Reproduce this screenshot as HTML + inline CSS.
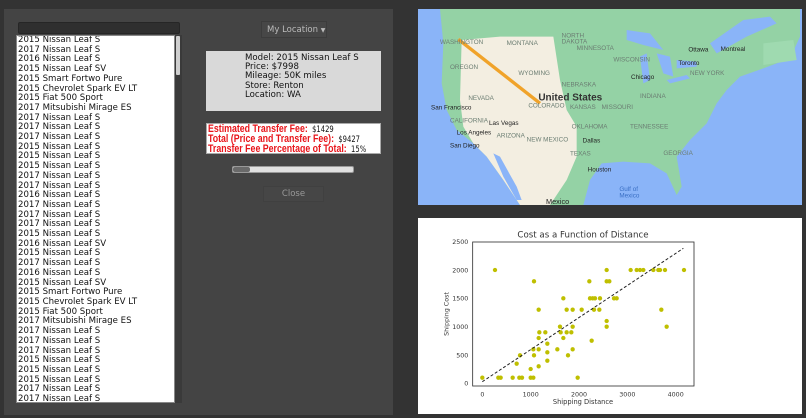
<!DOCTYPE html>
<html><head><meta charset="utf-8"><style>
*{margin:0;padding:0;box-sizing:border-box}
body{width:806px;height:418px;background:#333;position:relative;overflow:hidden;font-family:"DejaVu Sans","Liberation Sans",sans-serif}
.abs{position:absolute}
#panel{left:4px;top:9px;width:389px;height:406px;background:#444}
#search{left:18px;top:22px;width:162px;height:12px;background:#2f2f2f;border:1px solid #262626;border-radius:2px}
#list{left:16px;top:35px;width:159px;height:368px;background:#fff;border:1px solid #888;overflow:hidden;font-size:8.6px;line-height:9.7px;color:#111;padding-left:1px;padding-top:0px;white-space:nowrap}
#sb{left:175px;top:35px;width:7px;height:368px;background:#3a3a3a}
#thumb{left:176px;top:36px;width:4px;height:39px;background:#cfcfcf;border-radius:1px}
#dd{left:261px;top:21px;width:66px;height:17px;background:#474747;border:1px solid #3c3c3c;color:#bbb;font-size:8.5px;line-height:16px;padding-left:5px;white-space:nowrap}
#info{left:206px;top:51px;width:175px;height:60px;background:#d9d9d9;font-size:8.6px;line-height:9.2px;color:#111;padding-left:39px;padding-top:3px;white-space:nowrap}
#fee{left:206px;top:123px;width:175px;height:31px;background:#fff;border:1px solid #aaa;padding-left:1px;padding-top:0px;overflow:hidden}
#fee div{white-space:nowrap;transform:scaleX(0.8);transform-origin:left;height:9.9px;line-height:10px;font-size:8.5px;color:#111}
#fee b{color:#e8151b;font-family:"Liberation Sans",sans-serif;font-size:11px;font-weight:bold}
#pb{left:232px;top:166px;width:122px;height:7px;background:#e0e0e0;border:1px solid #999;border-radius:2px}
#pbc{left:233px;top:167px;width:17px;height:5px;background:#6a6a6a;border-radius:2px}
#close{left:263px;top:186px;width:61px;height:16px;background:#464646;border:1px solid #404040;color:#999;font-size:8.5px;line-height:15px;text-align:center}
</style></head><body>
<div id="panel" class="abs"></div>
<div id="search" class="abs"></div>
<div id="list" class="abs">2015 Nissan Leaf S<br>2017 Nissan Leaf S<br>2016 Nissan Leaf S<br>2015 Nissan Leaf SV<br>2015 Smart Fortwo Pure<br>2015 Chevrolet Spark EV LT<br>2015 Fiat 500 Sport<br>2017 Mitsubishi Mirage ES<br>2017 Nissan Leaf S<br>2017 Nissan Leaf S<br>2017 Nissan Leaf S<br>2015 Nissan Leaf S<br>2015 Nissan Leaf S<br>2015 Nissan Leaf S<br>2017 Nissan Leaf S<br>2017 Nissan Leaf S<br>2016 Nissan Leaf S<br>2017 Nissan Leaf S<br>2017 Nissan Leaf S<br>2017 Nissan Leaf S<br>2015 Nissan Leaf S<br>2016 Nissan Leaf SV<br>2015 Nissan Leaf S<br>2017 Nissan Leaf S<br>2016 Nissan Leaf S<br>2015 Nissan Leaf SV<br>2015 Smart Fortwo Pure<br>2015 Chevrolet Spark EV LT<br>2015 Fiat 500 Sport<br>2017 Mitsubishi Mirage ES<br>2017 Nissan Leaf S<br>2017 Nissan Leaf S<br>2017 Nissan Leaf S<br>2015 Nissan Leaf S<br>2015 Nissan Leaf S<br>2015 Nissan Leaf S<br>2017 Nissan Leaf S<br>2017 Nissan Leaf S</div>
<div id="sb" class="abs"></div><div id="thumb" class="abs"></div>
<div id="dd" class="abs">My Location <span style="font-size:6px">&#9660;</span></div>
<div id="info" class="abs">Model: 2015 Nissan Leaf S<br>Price: $7998<br>Mileage: 50K miles<br>Store: Renton<br>Location: WA</div>
<div id="fee" class="abs"><div><b>Estimated Transfer Fee:</b>&nbsp; $1429</div><div><b>Total (Price and Transfer Fee):</b>&nbsp; $9427</div><div><b>Transfer Fee Percentage of Total:</b>&nbsp; 15%</div></div>
<div id="pb" class="abs"></div><div id="pbc" class="abs"></div>
<div id="close" class="abs">Close</div>

<svg class="abs" style="left:418px;top:9px" width="384" height="196" viewBox="24 27 1152 588" preserveAspectRatio="none">
<rect x="24" y="27" width="1152" height="588" fill="#8ab4f8"/>
<path d="M90 27 L1170 27 L1170 110 L1140 175 L1060 205 L990 230 L950 270 L920 310 L890 370 L840 420 L800 470 L815 560 L800 585 L770 520 L720 490 L640 485 L575 490 L540 540 L520 615 L330 615 L280 540 L230 470 L190 430 L140 390 L110 330 L95 250 L100 130 Z" fill="#94d2a5"/>
<path d="M155 120 L270 110 L430 110 L450 240 L470 330 L500 380 L500 470 L470 540 L420 615 L330 615 L280 540 L230 470 L190 430 L160 380 L150 300 Z" fill="#f3eee1"/>
<path d="M250 460 L270 470 L320 560 L335 600 L320 600 L280 530 Z" fill="#8ab4f8"/>
<path d="M650 90 L720 100 L760 150 L700 135 L650 120 Z M690 170 L710 160 L720 240 L700 250 Z M740 160 L780 170 L790 230 L760 220 Z M800 180 L860 185 L860 200 L800 205 Z M770 240 L830 225 L840 235 L780 250 Z M900 130 L1000 60 L1080 50 L1100 70 L1010 110 L920 160 Z" fill="#8ab4f8"/>
<path d="M1060 130 L1150 120 L1160 180 L1060 195 Z" fill="#9fdab0"/>
<line x1="145" y1="118" x2="390" y2="310" stroke="#f0a32a" stroke-width="10"/>
<g font-family="Liberation Sans,sans-serif" fill="#6b7d72" font-size="19">
<text x="385" y="302" font-size="30" font-weight="bold" fill="#333">United States</text>
<text x="63" y="328" fill="#222">San Francisco</text>
<text x="237" y="375" fill="#222">Las Vegas</text>
<text x="140" y="403" fill="#222">Los Angeles</text>
<text x="120" y="442" fill="#222">San Diego</text>
<text x="518" y="428" fill="#222">Dallas</text>
<text x="533" y="515" fill="#222">Houston</text>
<text x="663" y="237" fill="#222">Chicago</text>
<text x="805" y="195" fill="#222">Toronto</text>
<text x="835" y="155" fill="#222">Ottawa</text>
<text x="932" y="153" fill="#222">Montreal</text>
<text x="408" y="612" fill="#222" font-size="22">Mexico</text>
<text x="90" y="132">WASHINGTON</text><text x="290" y="135">MONTANA</text><text x="120" y="207">OREGON</text>
<text x="325" y="225">WYOMING</text><text x="175" y="300">NEVADA</text><text x="355" y="322">COLORADO</text>
<text x="455" y="260">NEBRASKA</text><text x="480" y="327">KANSAS</text><text x="485" y="385">OKLAHOMA</text>
<text x="350" y="424">NEW MEXICO</text><text x="120" y="367">CALIFORNIA</text><text x="260" y="412">ARIZONA</text>
<text x="480" y="466">TEXAS</text><text x="455" y="112">NORTH</text><text x="455" y="130">DAKOTA</text>
<text x="500" y="150">MINNESOTA</text><text x="610" y="185">WISCONSIN</text><text x="575" y="327">MISSOURI</text>
<text x="690" y="294">INDIANA</text><text x="660" y="385">TENNESSEE</text><text x="840" y="225">NEW YORK</text>
<text x="760" y="465">GEORGIA</text><text x="628" y="573" fill="#3a6fc4">Gulf of</text><text x="628" y="592" fill="#3a6fc4">Mexico</text>
</g>
</svg>

<svg class="abs" style="left:418px;top:218px" width="384" height="196" viewBox="24 24 1152 588" preserveAspectRatio="none">
<rect x="24" y="24" width="1152" height="588" fill="#fff"/>
<rect x="188" y="96" width="664" height="432" fill="none" stroke="#333" stroke-width="2.5"/>
<g fill="#bfbf00">
<circle cx="217" cy="503" r="6.5"/><circle cx="255" cy="180" r="6.5"/><circle cx="265" cy="503" r="6.5"/><circle cx="272" cy="503" r="6.5"/><circle cx="308" cy="503" r="6.5"/><circle cx="320" cy="461" r="6.5"/><circle cx="328" cy="503" r="6.5"/><circle cx="336" cy="503" r="6.5"/><circle cx="330" cy="436" r="6.5"/><circle cx="362" cy="477" r="6.5"/><circle cx="362" cy="503" r="6.5"/><circle cx="370" cy="503" r="6.5"/><circle cx="372" cy="214" r="6.5"/><circle cx="370" cy="418" r="6.5"/><circle cx="372" cy="436" r="6.5"/><circle cx="386" cy="299" r="6.5"/><circle cx="386" cy="384" r="6.5"/><circle cx="386" cy="418" r="6.5"/><circle cx="386" cy="469" r="6.5"/><circle cx="388" cy="367" r="6.5"/><circle cx="406" cy="367" r="6.5"/><circle cx="412" cy="401" r="6.5"/><circle cx="412" cy="427" r="6.5"/><circle cx="412" cy="452" r="6.5"/><circle cx="442" cy="418" r="6.5"/><circle cx="450" cy="350" r="6.5"/><circle cx="452" cy="367" r="6.5"/><circle cx="460" cy="265" r="6.5"/><circle cx="460" cy="384" r="6.5"/><circle cx="470" cy="299" r="6.5"/><circle cx="470" cy="367" r="6.5"/><circle cx="474" cy="436" r="6.5"/><circle cx="484" cy="367" r="6.5"/><circle cx="488" cy="299" r="6.5"/><circle cx="488" cy="350" r="6.5"/><circle cx="488" cy="418" r="6.5"/><circle cx="503" cy="503" r="6.5"/><circle cx="515" cy="299" r="6.5"/><circle cx="538" cy="214" r="6.5"/><circle cx="540" cy="265" r="6.5"/><circle cx="545" cy="392" r="6.5"/><circle cx="548" cy="265" r="6.5"/><circle cx="552" cy="299" r="6.5"/><circle cx="555" cy="265" r="6.5"/><circle cx="568" cy="299" r="6.5"/><circle cx="570" cy="265" r="6.5"/><circle cx="590" cy="180" r="6.5"/><circle cx="590" cy="214" r="6.5"/><circle cx="590" cy="333" r="6.5"/><circle cx="590" cy="350" r="6.5"/><circle cx="598" cy="214" r="6.5"/><circle cx="612" cy="265" r="6.5"/><circle cx="620" cy="265" r="6.5"/><circle cx="662" cy="180" r="6.5"/><circle cx="680" cy="180" r="6.5"/><circle cx="690" cy="180" r="6.5"/><circle cx="700" cy="180" r="6.5"/><circle cx="730" cy="180" r="6.5"/><circle cx="745" cy="180" r="6.5"/><circle cx="750" cy="180" r="6.5"/><circle cx="754" cy="299" r="6.5"/><circle cx="765" cy="180" r="6.5"/><circle cx="770" cy="350" r="6.5"/><circle cx="822" cy="180" r="6.5"/>
</g>
<line x1="217" y1="515" x2="820" y2="115" stroke="#222" stroke-width="3" stroke-dasharray="9,6"/>
<g font-family="DejaVu Sans,sans-serif" font-size="19" fill="#333">
<text x="175" y="102" text-anchor="end">2500</text><text x="175" y="187" text-anchor="end">2000</text><text x="175" y="272" text-anchor="end">1500</text><text x="175" y="357" text-anchor="end">1000</text><text x="175" y="442" text-anchor="end">500</text><text x="175" y="526" text-anchor="end">0</text>
<text x="217" y="560" text-anchor="middle">0</text><text x="362" y="560" text-anchor="middle">1000</text><text x="507" y="560" text-anchor="middle">2000</text><text x="652" y="560" text-anchor="middle">3000</text><text x="797" y="560" text-anchor="middle">4000</text>
<text x="519" y="582" text-anchor="middle" font-size="20">Shipping Distance</text>
<text x="519" y="82" text-anchor="middle" font-size="26">Cost as a Function of Distance</text>
<text transform="translate(115,312) rotate(-90)" text-anchor="middle" font-size="19">Shipping Cost</text>
</g>
</svg>
</body></html>
